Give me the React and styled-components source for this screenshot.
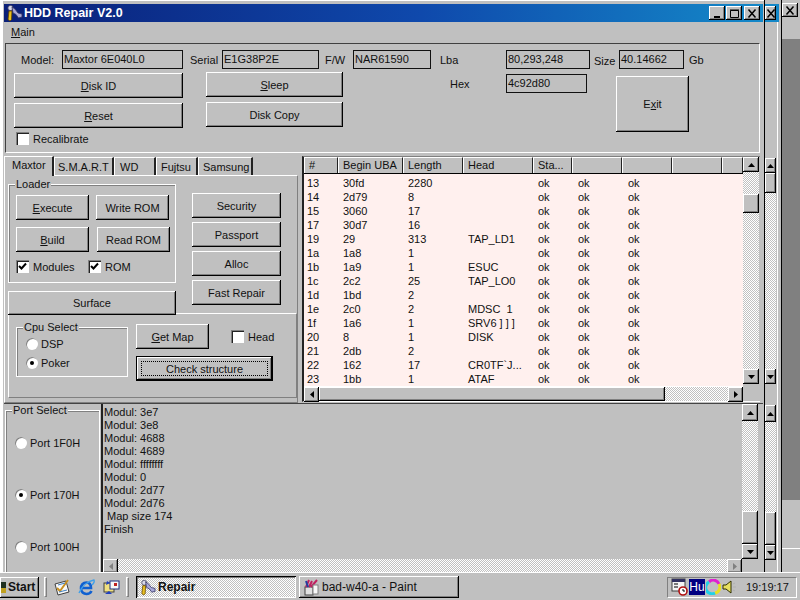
import React from "react";
import styled, { createGlobalStyle, css } from "styled-components";

const GlobalStyle = createGlobalStyle`
  html, body {
    margin: 0;
    padding: 0;
    width: 800px;
    height: 600px;
    overflow: hidden;
    background: #c0c0c0;
  }
  * {
    box-sizing: border-box;
  }
`;

const dither = css`
  background: repeating-conic-gradient(#fff 0 25%, #c0c0c0 0 50%) 0 0 / 2px 2px;
`;

const raised = css`
  background-color: #c0c0c0;
  box-shadow: inset -1px -1px #000, inset 1px 1px #fff, inset -2px -2px #808080;
`;

const ROWS = [
  ["13", "30fd", "2280", ""],
  ["14", "2d79", "8", ""],
  ["15", "3060", "17", ""],
  ["17", "30d7", "16", ""],
  ["19", "29", "313", "TAP_LD1"],
  ["1a", "1a8", "1", ""],
  ["1b", "1a9", "1", "ESUC"],
  ["1c", "2c2", "25", "TAP_LO0"],
  ["1d", "1bd", "2", ""],
  ["1e", "2c0", "2", "MDSC  1"],
  ["1f", "1a6", "1", "SRV6 ] ] ]"],
  ["20", "8", "1", "DISK"],
  ["21", "2db", "2", ""],
  ["22", "162", "17", "CR0TF`J..."],
  ["23", "1bb", "1", "ATAF"],
];

const LOG = [
  "Modul: 3e7",
  "Modul: 3e8",
  "Modul: 4688",
  "Modul: 4689",
  "Modul: ffffffff",
  "Modul: 0",
  "Modul: 2d77",
  "Modul: 2d76",
  "\u00a0Map size 174",
  "Finish",
];

const HEADERS = ["#", "Begin UBA", "Length", "Head", "Sta...", "", "", "", ""];
const COLUMNS = "34px 65px 60px 70px 39px 50px 50px 50px 21px";

const App = () => {
  return (
    <Screen>
      <GlobalStyle />
      <Desktop>
        <FarWindow>
          <CaptionButton $glyph="close" />
          <FarDark />
          <FarLight />
        </FarWindow>
        <BackWindow>
          <BackTitle>
            <CaptionButton $glyph="close" />
          </BackTitle>
          <BackBody>
            <BackScroll $top={115} $height={226}>
              <ArrowButton $dir="up" />
              <Thumb $h={20} />
              <Track />
              <ArrowButton $dir="down" />
            </BackScroll>
            <BackScroll $top={21} $height={155}>
              <ArrowButton $dir="up" $h={17} />
              <Track />
              <Thumb $h={33} />
              <ArrowButton $dir="down" />
            </BackScroll>
          </BackBody>
        </BackWindow>

        <MainWindow>
          <TitleBar>
            <WrenchIcon size={18} />
            <TitleText>HDD Repair V2.0</TitleText>
            <CaptionGroup>
              <CaptionButton $glyph="min" />
              <CaptionButton $glyph="max" />
              <CaptionButton $glyph="close" />
            </CaptionGroup>
          </TitleBar>
          <MenuBar>
            <MenuItem>
              <u>M</u>ain
            </MenuItem>
          </MenuBar>

          <TopPanel>
            <FieldRow>
              <Label $w={41}>Model:</Label>
              <Field $w={121}>Maxtor 6E040L0</Field>
              <Label $w={32} $ml={7}>
                Serial
              </Label>
              <Field $w={97}>E1G38P2E</Field>
              <Label $w={28} $ml={6}>
                F/W
              </Label>
              <Field $w={78}>NAR61590</Field>
              <Label $w={66} $ml={9}>
                Lba
              </Label>
              <Field $w={84}>80,293,248</Field>
              <Label $w={25} $ml={4} $down={2}>
                Size
              </Label>
              <Field $w={65}>40.14662</Field>
              <Label $w={24} $ml={5}>
                Gb
              </Label>
            </FieldRow>
            <ControlRow>
              <ButtonColumn $w={169} $top={1}>
                <Button $h={25}>
                  <u>D</u>isk ID
                </Button>
                <Button $h={25}>
                  <u>R</u>eset
                </Button>
                <RecalibrateRow>
                  <Check label="Recalibrate" />
                </RecalibrateRow>
              </ButtonColumn>
              <ButtonColumn $w={137} $ml={23}>
                <Button $h={25}>
                  <u>S</u>leep
                </Button>
                <Button $h={25}>Disk Copy</Button>
              </ButtonColumn>
              <HexRow>
                <Label $w={56}>Hex</Label>
                <Field $w={81}>4c92d80</Field>
              </HexRow>
              <ExitButton>
                E<u>x</u>it
              </ExitButton>
            </ControlRow>
          </TopPanel>

          <MiddleRow>
            <TabColumn>
              <TabStrip>
                <Tab $w={50} $active>
                  Maxtor
                </Tab>
                <Tab $w={60}>S.M.A.R.T</Tab>
                <Tab $w={42} $pad={5}>
                  WD
                </Tab>
                <Tab $w={42} $pad={4}>
                  Fujtsu
                </Tab>
                <Tab $w={55} $pad={4}>
                  Samsung
                </Tab>
              </TabStrip>
              <TabBody>
                <UpperArea>
                  <LeftStack>
                    <LoaderGroup>
                      <GroupTitle>Loader</GroupTitle>
                      <LoaderGrid>
                        <Button $w={73} $h={25}>
                          <u>E</u>xecute
                        </Button>
                        <Button $w={73} $h={25}>
                          Write ROM
                        </Button>
                        <Button $w={73} $h={25}>
                          <u>B</u>uild
                        </Button>
                        <Button $w={73} $h={25} $ml={1}>
                          Read ROM
                        </Button>
                      </LoaderGrid>
                      <LoaderChecks>
                        <Check $w={72} $checked label="Modules" />
                        <Check $checked label="ROM" />
                      </LoaderChecks>
                    </LoaderGroup>
                    <SurfaceButton $h={24}>Surface</SurfaceButton>
                  </LeftStack>
                  <SideButtons>
                    <Button $w={89} $h={25}>
                      Security
                    </Button>
                    <Button $w={89} $h={25}>
                      Passport
                    </Button>
                    <Button $w={89} $h={25}>
                      Alloc
                    </Button>
                    <Button $w={89} $h={25}>
                      Fast Repair
                    </Button>
                  </SideButtons>
                </UpperArea>
                <LowerPanel>
                  <CpuGroup>
                    <GroupTitle>Cpu Select</GroupTitle>
                    <Radio label="DSP" $mb={7} />
                    <Radio label="Poker" $selected />
                  </CpuGroup>
                  <MapColumn>
                    <MapRow>
                      <Button $w={73} $h={25}>
                        <u>G</u>et Map
                      </Button>
                      <Check $ml={22} label="Head" />
                    </MapRow>
                    <FocusButton>
                      <FocusInner>Check structure</FocusInner>
                    </FocusButton>
                  </MapColumn>
                </LowerPanel>
              </TabBody>
            </TabColumn>

            <ListFrame>
              <ListMain>
                <HeaderRow>
                  {HEADERS.map((text, i) => (
                    <HeaderCell key={i}>{text}</HeaderCell>
                  ))}
                </HeaderRow>
                <ListBody>
                  {ROWS.map((row) => (
                    <ListRow key={row[0]}>
                      <Cell $pad={3}>{row[0]}</Cell>
                      <Cell>{row[1]}</Cell>
                      <Cell>{row[2]}</Cell>
                      <Cell>{row[3]}</Cell>
                      <Cell>ok</Cell>
                      <Cell $pad={6}>ok</Cell>
                      <Cell $pad={6}>ok</Cell>
                    </ListRow>
                  ))}
                </ListBody>
                <HScroll>
                  <ArrowButton $dir="left" $h={15} />
                  <HThumb />
                  <Track />
                  <ArrowButton $dir="right" $h={15} />
                </HScroll>
              </ListMain>
              <VScroll>
                <ArrowButton $dir="up" />
                <Track $fixed={22} />
                <Thumb $h={19} />
                <Track />
                <ArrowButton $dir="down" />
                <ScrollCorner />
              </VScroll>
            </ListFrame>
          </MiddleRow>

          <BottomRow>
            <PortGroup>
              <GroupTitle>Port Select</GroupTitle>
              <PortList>
                <Radio label="Port 1F0H" />
                <Radio label="Port 170H" $selected />
                <Radio label="Port 100H" />
              </PortList>
            </PortGroup>
            <Memo>
              <MemoMain>
                <MemoText>
                  {LOG.map((line, i) => (
                    <div key={i}>{line}</div>
                  ))}
                </MemoText>
                <HScroll $memo>
                  <ArrowButton $dir="left" $h={14} $dim />
                  <Track />
                  <ArrowButton $dir="right" $h={14} $dim />
                </HScroll>
              </MemoMain>
              <MemoScroll>
                <ArrowButton $dir="up" $h={17} />
                <Track />
                <Thumb $h={33} />
                <ArrowButton $dir="down" />
              </MemoScroll>
            </Memo>
          </BottomRow>
        </MainWindow>
      </Desktop>

      <Taskbar>
        <StartButton>
          <FlagClip />
          Start
        </StartButton>
        <Grip $ml={5} />
        <QuickLaunch>
          <NoteIcon />
          <IeIcon />
          <FolderIcon />
        </QuickLaunch>
        <Grip $ml={6} />
        <TaskButton $active $ml={7}>
          <WrenchIcon size={17} />
          <b>Repair</b>
        </TaskButton>
        <TaskButton $ml={3}>
          <PaintIcon />
          bad-w40-a - Paint
        </TaskButton>
        <Tray>
          <CalendarIcon />
          <HuBadge>Hu</HuBadge>
          <RingIcon />
          <SpeakerIcon />
          <Clock>19:19:17</Clock>
        </Tray>
      </Taskbar>
    </Screen>
  );
};

/* form controls */

const Check = ({ label, $checked, $ml, $w }) => (
  <CheckWrap $ml={$ml} $w={$w}>
    <CheckBox>
      {$checked && (
        <svg width="9" height="9" viewBox="0 0 9 9">
          <path d="M1 4 L3.5 6.5 L8 1.5" fill="none" stroke="#000" strokeWidth="2" />
        </svg>
      )}
    </CheckBox>
    {label}
  </CheckWrap>
);

const Radio = ({ label, $selected, $mb }) => (
  <RadioWrap $mb={$mb}>
    <RadioDot $selected={$selected} />
    {label}
  </RadioWrap>
);

/* drawings */

const ARROWS = {
  up: "M0 4 L3.5 0 L7 4 Z",
  down: "M0 0 L7 0 L3.5 4 Z",
  left: "M4 0 L4 7 L0 3.5 Z",
  right: "M0 0 L0 7 L4 3.5 Z",
};

const ArrowButton = ({ $dir, $h = 15, $dim }) => {
  const flat = $dir === "up" || $dir === "down";
  return (
    <ArrowBox $h={$h} $dir={$dir}>
      <svg width={flat ? 7 : 4} height={flat ? 4 : 7} viewBox={flat ? "0 0 7 4" : "0 0 4 7"}>
        <path d={ARROWS[$dir]} fill={$dim ? "#808080" : "#000"} />
      </svg>
    </ArrowBox>
  );
};

const CaptionButton = ({ $glyph }) => (
  <CaptionBox>
    <svg width="10" height="9" viewBox="0 0 10 9">
      {$glyph === "min" && <rect x="2" y="7" width="6" height="2" fill="#000" />}
      {$glyph === "max" && (
        <path d="M1.5 1.5 H9.5 V8.5 H1.5 Z M1 1 H10" fill="none" stroke="#000" />
      )}
      {$glyph === "close" && (
        <path d="M1.5 0.5 L8.5 8.5 M8.5 0.5 L1.5 8.5" fill="none" stroke="#000" strokeWidth="1.5" />
      )}
    </svg>
  </CaptionBox>
);

const WrenchIcon = ({ size }) => (
  <svg width={size} height={size} viewBox="0 0 18 18">
    <circle cx="5.5" cy="4" r="2.6" fill="#d8d8e8" stroke="#404060" strokeWidth="0.8" />
    <path d="M4 7 H7 L6.5 15.5 L5 17 L3 15.5 Z" fill="#e8c020" stroke="#604000" strokeWidth="0.8" />
    <path d="M7 3 L10 5 L13 9 L17 10 L17 13 L13.5 14 L11 10.5 L8 9 Z" fill="#a8a8d8" stroke="#303060" strokeWidth="0.8" />
  </svg>
);

const NoteIcon = () => (
  <svg width="17" height="17" viewBox="0 0 17 17">
    <path d="M1 5 L12 2 L15 13 L4 16 Z" fill="#f8f8f8" stroke="#404040" />
    <path d="M3 9 L6 12 L14 1" fill="none" stroke="#c89020" strokeWidth="2" />
    <path d="M4 6 L11 4 M5 13 L13 11" stroke="#4080c0" />
  </svg>
);

const IeIcon = () => (
  <svg width="18" height="17" viewBox="0 0 18 17">
    <path d="M3 9 H13 C13 5 11 3.5 8.5 3.5 C5 3.5 3 6 3 9.5 C3 13 5.5 15 8.5 15 C11 15 12.5 14 13.5 12" fill="none" stroke="#1060d0" strokeWidth="2.6" />
    <path d="M1 14 C4 7 10 2 16 1 C17 3 15 5 14 6" fill="none" stroke="#40a0e8" strokeWidth="1.4" />
  </svg>
);

const FolderIcon = () => (
  <svg width="17" height="17" viewBox="0 0 17 17">
    <rect x="1" y="4" width="10" height="9" fill="#f0e080" stroke="#404040" />
    <rect x="7" y="2" width="9" height="8" fill="#f8f8f8" stroke="#203080" />
    <rect x="11" y="4" width="3" height="3" fill="#c02020" />
    <path d="M2 15 H9 L6 12 Z" fill="#2040c0" />
    <path d="M4 2 L7 4 L3 6 Z" fill="#2040c0" />
  </svg>
);

const PaintIcon = () => (
  <svg width="16" height="17" viewBox="0 0 16 17">
    <rect x="2" y="8" width="8" height="8" fill="#e0e0e0" stroke="#404040" />
    <path d="M3 8 L6 1 M6 8 L9 2 M8 8 L14 1" stroke="#c02060" strokeWidth="2" />
    <path d="M5 8 L3 2" stroke="#2040a0" strokeWidth="2" />
    <rect x="10" y="6" width="5" height="9" fill="#f8f8f8" stroke="#808080" />
  </svg>
);

const CalendarIcon = () => (
  <svg width="17" height="18" viewBox="0 0 17 18">
    <rect x="1" y="1" width="13" height="12" fill="#f4f4f4" stroke="#404040" />
    <rect x="1" y="1" width="13" height="3" fill="#303060" />
    <path d="M3 6 H7 M3 9 H7" stroke="#000" />
    <circle cx="12" cy="13" r="4" fill="#fff" stroke="#b01010" strokeWidth="1.6" />
    <path d="M12 11 V13 H14" stroke="#000" fill="none" />
  </svg>
);

const RingIcon = () => (
  <svg width="15" height="16" viewBox="0 0 15 16">
    <path d="M3 3 A6 6 0 0 1 13 5" fill="none" stroke="#e020d0" strokeWidth="3" />
    <path d="M13 5 A6 6 0 0 1 9 14" fill="none" stroke="#e8e020" strokeWidth="3" />
    <path d="M9 14 A6 6 0 0 1 3 3" fill="none" stroke="#20d0e8" strokeWidth="3" />
  </svg>
);

const SpeakerIcon = () => (
  <svg width="15" height="16" viewBox="0 0 15 16">
    <path d="M1 6 H4 L9 2 V14 L4 10 H1 Z" fill="#e8e060" stroke="#303000" />
    <path d="M11 8 H14 M11 5 L13 4 M11 11 L13 12" stroke="#b0b0b0" />
  </svg>
);

/* page */

const Screen = styled.div`
  width: 800px;
  height: 600px;
  display: flex;
  flex-direction: column;
  overflow: hidden;
  font-family: "Liberation Sans", Arial, sans-serif;
  font-size: 11px;
  color: #111;
  background: #c0c0c0;
`;

const Desktop = styled.div`
  position: relative;
  height: 572px;
  flex: none;
  background: #c0c0c0;
`;

const MainWindow = styled.div`
  position: absolute;
  left: 0;
  top: 0;
  width: 764px;
  height: 572px;
  padding: 4px 1px 0 4px;
  overflow: hidden;
  background: #c0c0c0;
  box-shadow: inset 3px 1px #fff, inset 1px 3px #c0c0c0;
`;

const TitleBar = styled.div`
  height: 18px;
  width: 759px;
  padding-left: 1px;
  display: flex;
  align-items: center;
  gap: 1px;
  background: linear-gradient(90deg, #0a1f78 0%, #0f49ac 55%, #1488c8 100%);
`;

const TitleText = styled.span`
  font-weight: bold;
  font-size: 12.5px;
  color: #fff;
`;

const CaptionGroup = styled.div`
  margin-left: auto;
  margin-right: 3px;
  display: flex;
  gap: 1px;
  & > :last-child {
    margin-left: 1px;
  }
`;

const CaptionBox = styled.div`
  width: 16px;
  height: 14px;
  display: flex;
  align-items: center;
  justify-content: center;
  ${raised}
`;

const MenuBar = styled.div`
  height: 21px;
  padding: 0 0 2px 7px;
  display: flex;
  align-items: center;
`;

const MenuItem = styled.span`
  font-size: 11px;
`;

const TopPanel = styled.div`
  width: 755px;
  height: 110px;
  margin-left: 1px;
  padding-top: 6px;
  border-top: 1px solid #404040;
  border-left: 1px solid #404040;
  border-right: 1px solid #fff;
  border-bottom: 1px solid #fff;
`;

const FieldRow = styled.div`
  height: 19px;
  padding-left: 15px;
  display: flex;
  align-items: center;
`;

const Label = styled.span`
  flex: none;
  width: ${(p) => p.$w}px;
  margin-left: ${(p) => p.$ml || 0}px;
  padding-top: ${(p) => p.$down || 0}px;
`;

const Field = styled.div`
  flex: none;
  width: ${(p) => p.$w}px;
  height: 19px;
  padding-left: 1px;
  line-height: 17px;
  border: 1px solid #111;
  background: #c0c0c0;
`;

const ControlRow = styled.div`
  margin-top: 3px;
  padding-left: 8px;
  display: flex;
  align-items: flex-start;
`;

const ButtonColumn = styled.div`
  flex: none;
  width: ${(p) => p.$w}px;
  margin-left: ${(p) => p.$ml || 0}px;
  margin-top: ${(p) => p.$top || 0}px;
  display: flex;
  flex-direction: column;
  gap: 5px;
`;

const Button = styled.div`
  flex: none;
  width: ${(p) => (p.$w ? `${p.$w}px` : "auto")};
  height: ${(p) => p.$h}px;
  margin-left: ${(p) => p.$ml || 0}px;
  display: flex;
  align-items: center;
  justify-content: center;
  white-space: pre;
  ${raised}
`;

const RecalibrateRow = styled.div`
  margin-left: 2px;
  margin-top: -1px;
`;

const HexRow = styled.div`
  margin-left: 107px;
  margin-top: 2px;
  display: flex;
  align-items: center;
`;

const ExitButton = styled(Button)`
  width: 73px;
  height: 56px;
  margin-left: 29px;
  margin-top: 4px;
`;

const CheckWrap = styled.label`
  display: flex;
  align-items: center;
  gap: 4px;
  width: ${(p) => (p.$w ? `${p.$w}px` : "auto")};
  margin-left: ${(p) => p.$ml || 0}px;
`;

const CheckBox = styled.span`
  flex: none;
  width: 13px;
  height: 13px;
  display: flex;
  align-items: center;
  justify-content: center;
  background: #fff;
  box-shadow: inset 1px 1px #808080, inset 2px 2px #222;
`;

const RadioWrap = styled.label`
  display: flex;
  align-items: center;
  gap: 3px;
  margin-bottom: ${(p) => p.$mb || 0}px;
`;

const RadioDot = styled.span`
  flex: none;
  width: 12px;
  height: 12px;
  border-radius: 50%;
  display: flex;
  align-items: center;
  justify-content: center;
  background: #fff;
  box-shadow: inset 1px 1px #808080;
  &::after {
    content: "";
    width: 4px;
    height: 4px;
    border-radius: 50%;
    background: ${(p) => (p.$selected ? "#000" : "transparent")};
  }
`;

/* tabs */

const MiddleRow = styled.div`
  height: 248px;
  margin-top: 2px;
  display: flex;
`;

const TabColumn = styled.div`
  flex: none;
  width: 294px;
  display: flex;
  flex-direction: column;
`;

const TabStrip = styled.div`
  height: 20px;
  display: flex;
  align-items: flex-end;
  position: relative;
  z-index: 1;
`;

const Tab = styled.div`
  flex: none;
  width: ${(p) => p.$w}px;
  height: ${(p) => (p.$active ? 20 : 18)}px;
  padding-left: ${(p) => (p.$active ? 7 : p.$pad || 3)}px;
  padding-top: ${(p) => (p.$active ? 2 : 3)}px;
  margin-bottom: ${(p) => (p.$active ? -1 : 0)}px;
  background: #c0c0c0;
  border-top: 1px solid #fff;
  border-left: 1px solid #fff;
  border-right: 2px solid #222;
`;

const TabBody = styled.div`
  flex: 1;
  padding: 8px 0 0 3px;
  border-top: 1px solid #fff;
  border-left: 1px solid #fff;
  border-right: 1px solid #808080;
  border-bottom: 1px solid #808080;
`;

const UpperArea = styled.div`
  display: flex;
  align-items: flex-start;
`;

const LeftStack = styled.div`
  flex: none;
  width: 168px;
  display: flex;
  flex-direction: column;
  gap: 8px;
  position: relative;
  z-index: 1;
`;

const Group = styled.div`
  position: relative;
  border: 1px solid #fff;
  box-shadow: inset 1px 1px #808080;
`;

const GroupTitle = styled.span`
  position: absolute;
  left: 6px;
  top: -7px;
  padding: 0 1px;
  line-height: 13px;
  background: #c0c0c0;
`;

const LoaderGroup = styled(Group)`
  height: 99px;
  padding: 10px 0 0 7px;
`;

const LoaderGrid = styled.div`
  display: grid;
  grid-template-columns: 73px 73px;
  column-gap: 7px;
  row-gap: 7px;
`;

const LoaderChecks = styled.div`
  margin-top: 8px;
  display: flex;
`;

const SurfaceButton = styled(Button)``;

const SideButtons = styled.div`
  margin-left: 16px;
  margin-top: 9px;
  display: flex;
  flex-direction: column;
  gap: 4px;
`;

const LowerPanel = styled.div`
  width: 289px;
  height: 85px;
  margin-top: -2px;
  padding: 13px 0 0 7px;
  display: flex;
  border-top: 1px solid #fff;
  border-left: 1px solid #fff;
  border-right: 1px solid #808080;
  border-bottom: 1px solid #808080;
`;

const CpuGroup = styled(Group)`
  flex: none;
  width: 112px;
  height: 50px;
  padding: 10px 0 0 9px;
`;

const MapColumn = styled.div`
  margin-left: 8px;
  margin-top: -3px;
  display: flex;
  flex-direction: column;
  gap: 7px;
`;

const MapRow = styled.div`
  display: flex;
  align-items: center;
`;

const FocusButton = styled(Button)`
  width: 137px;
  height: 25px;
  padding: 4px;
  border: 1px solid #000;
`;

const FocusInner = styled.div`
  width: 100%;
  height: 100%;
  display: flex;
  align-items: center;
  justify-content: center;
  border: 1px dotted #000;
`;

/* list */

const ListFrame = styled.div`
  flex: none;
  width: 458px;
  height: 246px;
  margin-left: 4px;
  margin-top: 1px;
  display: flex;
  border-left: 2px solid #222;
  border-top: 1px solid #808080;
  border-bottom: 1px solid #fff;
`;

const ListMain = styled.div`
  flex: none;
  width: 439px;
  display: flex;
  flex-direction: column;
`;

const HeaderRow = styled.div`
  flex: none;
  height: 17px;
  display: grid;
  grid-template-columns: ${COLUMNS};
  border-bottom: 1px solid #000;
`;

const HeaderCell = styled.div`
  padding-left: 4px;
  line-height: 15px;
  border-top: 1px solid #fff;
  border-left: 1px solid #fff;
  border-right: 1px solid #222;
  overflow: hidden;
  white-space: nowrap;
`;

const ListBody = styled.div`
  flex: 1;
  padding-top: 2px;
  overflow: hidden;
  background: #fff0ee;
`;

const ListRow = styled.div`
  height: 14px;
  display: grid;
  grid-template-columns: ${COLUMNS};
  line-height: 14px;
`;

const Cell = styled.div`
  padding-left: ${(p) => p.$pad || 5}px;
  white-space: pre;
`;

const HScroll = styled.div`
  flex: none;
  height: ${(p) => (p.$memo ? 14 : 15)}px;
  display: flex;
  ${(p) =>
    !p.$memo &&
    css`
      border-top: 1px solid #fff;
    `}
`;

const HThumb = styled.div`
  flex: none;
  width: 346px;
  ${raised}
`;

const Track = styled.div`
  flex: ${(p) => (p.$fixed ? `0 0 ${p.$fixed}px` : 1)};
  ${dither}
`;

const Thumb = styled.div`
  flex: none;
  height: ${(p) => p.$h}px;
  ${raised}
`;

const ArrowBox = styled.div`
  flex: none;
  height: ${(p) => p.$h}px;
  width: ${(p) => (p.$dir === "left" || p.$dir === "right" ? "15px" : "auto")};
  display: flex;
  align-items: center;
  justify-content: center;
  ${raised}
`;

const VScroll = styled.div`
  flex: none;
  width: 16px;
  display: flex;
  flex-direction: column;
`;

const ScrollCorner = styled.div`
  flex: none;
  height: 17px;
  background: #c0c0c0;
`;

/* bottom */

const BottomRow = styled.div`
  height: 170px;
  display: flex;
  border-top: 1px solid #444;
  padding-left: 1px;
`;

const PortGroup = styled(Group)`
  flex: none;
  width: 95px;
  height: 200px;
  margin-top: 6px;
`;

const PortList = styled.div`
  padding: 26px 0 0 9px;
  display: flex;
  flex-direction: column;
  gap: 40px;
`;

const Memo = styled.div`
  flex: none;
  width: 657px;
  margin-left: 1px;
  display: flex;
  border-left: 2px solid #222;
`;

const MemoMain = styled.div`
  flex: none;
  width: 639px;
  display: flex;
  flex-direction: column;
`;

const MemoText = styled.div`
  flex: 1;
  padding: 2px 0 0 1px;
  line-height: 13px;
  white-space: pre;
`;

const MemoScroll = styled.div`
  flex: none;
  width: 16px;
  height: 155px;
  display: flex;
  flex-direction: column;
`;

/* windows behind */

const BackWindow = styled.div`
  position: absolute;
  left: 764px;
  top: 0;
  width: 18px;
  height: 572px;
  border-left: 1px solid #000;
  border-right: 1px solid #000;
`;

const BackTitle = styled.div`
  width: 14px;
  height: 18px;
  margin-top: 4px;
  padding: 2px 3px 0 0;
  overflow: hidden;
  background: #1488c8;
  display: flex;
  justify-content: flex-end;
`;

const BackBody = styled.div`
  width: 13px;
  height: 550px;
  padding-top: 21px;
  border-right: 1px solid #fff;
`;

const BackScroll = styled.div`
  width: 11px;
  height: ${(p) => p.$height}px;
  margin-top: ${(p) => p.$top}px;
  display: flex;
  flex-direction: column;
`;

const FarWindow = styled.div`
  position: absolute;
  left: 782px;
  top: 0;
  width: 18px;
  height: 572px;
  padding-top: 3px;
  display: flex;
  flex-direction: column;
`;

const FarDark = styled.div`
  flex: none;
  height: 461px;
  margin-top: 22px;
  background: #808080;
`;

const FarLight = styled.div`
  flex: 1;
  margin-top: 48px;
  border-top: 1px solid #fff;
`;

/* taskbar */

const Taskbar = styled.div`
  height: 28px;
  flex: none;
  display: flex;
  align-items: center;
  padding-top: 1px;
  border-top: 1px solid #fff;
  background: #c0c0c0;
`;

const StartButton = styled.div`
  flex: none;
  width: 39px;
  height: 21px;
  padding-left: 1px;
  display: flex;
  align-items: center;
  gap: 2px;
  font-weight: bold;
  font-size: 12px;
  ${raised}
`;

const FlagClip = styled.span`
  flex: none;
  width: 5px;
  height: 11px;
  background: linear-gradient(#203020 50%, #c0a020 50%);
`;

const Grip = styled.div`
  flex: none;
  width: 3px;
  height: 20px;
  margin-left: ${(p) => p.$ml}px;
  border-top: 1px solid #fff;
  border-left: 1px solid #fff;
  border-right: 1px solid #808080;
  border-bottom: 1px solid #808080;
`;

const QuickLaunch = styled.div`
  flex: none;
  margin-left: 7px;
  display: flex;
  gap: 7px;
`;

const TaskButton = styled.div`
  flex: none;
  width: 160px;
  height: 22px;
  margin-left: ${(p) => p.$ml}px;
  padding-left: ${(p) => (p.$active ? 3 : 4)}px;
  display: flex;
  align-items: center;
  gap: ${(p) => (p.$active ? 2 : 3)}px;
  font-size: 12px;
  ${(p) =>
    p.$active
      ? css`
          ${dither}
          box-shadow: inset 1px 1px #000, inset -1px -1px #fff, inset 2px 2px #808080;
        `
      : raised}
`;

const Tray = styled.div`
  flex: none;
  width: 130px;
  height: 21px;
  margin-left: auto;
  margin-right: 3px;
  padding-left: 3px;
  display: flex;
  align-items: center;
  gap: 1px;
  border-top: 1px solid #808080;
  border-left: 1px solid #808080;
  border-right: 1px solid #fff;
  border-bottom: 1px solid #fff;
`;

const HuBadge = styled.span`
  flex: none;
  width: 16px;
  height: 16px;
  background: #000080;
  color: #fff;
  font-size: 12px;
  line-height: 16px;
  text-align: center;
`;

const Clock = styled.span`
  margin-left: 8px;
  font-size: 11px;
`;

export default App;
